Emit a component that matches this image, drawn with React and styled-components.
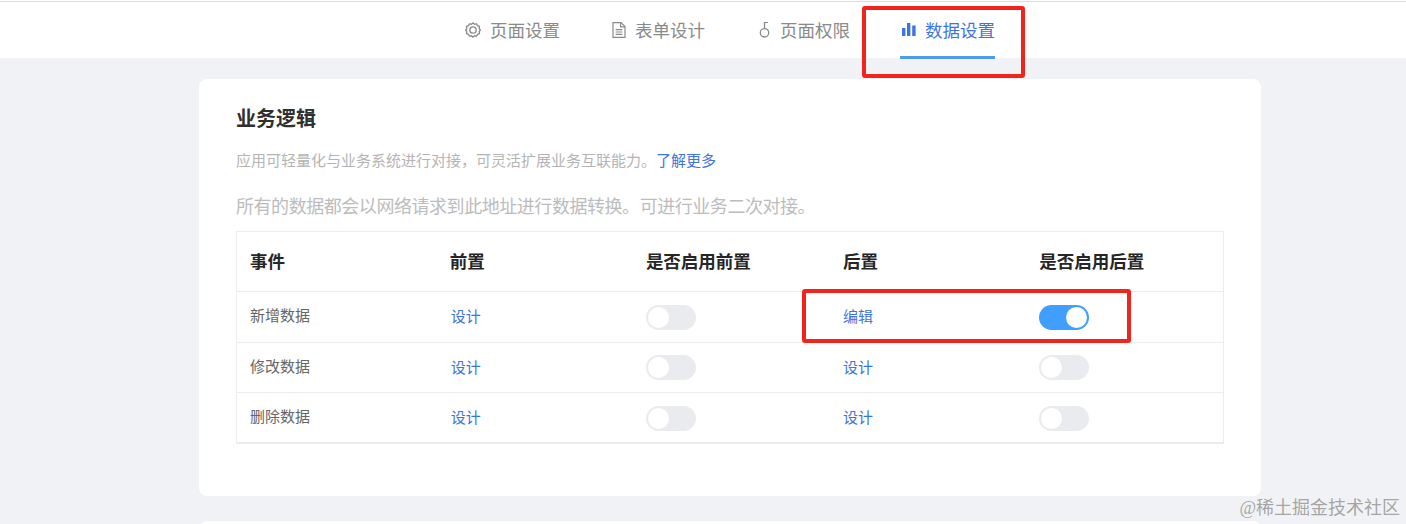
import styled, { createGlobalStyle } from 'styled-components'

const GlobalStyle = createGlobalStyle`
  html, body {
    margin: 0;
    padding: 0;
    background: #f0f2f5;
    font-family: "Liberation Sans", "Noto Sans CJK SC", sans-serif;
  }
`

const tabs = [
  { label: '页面设置', icon: 'gear' },
  { label: '表单设计', icon: 'doc' },
  { label: '页面权限', icon: 'key' },
  { label: '数据设置', icon: 'bars', active: true },
]

const rows = [
  { name: '新增数据', post: '编辑', postOn: true },
  { name: '修改数据', post: '设计' },
  { name: '删除数据', post: '设计' },
]

function TabIcon({ type }) {
  if (type === 'gear') {
    return (
      <svg width="16" height="16" viewBox="0 0 16 16" fill="none" stroke="currentColor" strokeWidth="1.3">
        <path d="M8 .9l1.6 1.3 2-.3 1 1.8 1.9.8-.3 2L15.4 8l-1.2 1.5.3 2-1.9.8-1 1.8-2-.3L8 15.1l-1.6-1.3-2 .3-1-1.8-1.9-.8.3-2L.6 8l1.2-1.5-.3-2 1.9-.8 1-1.8 2 .3z" />
        <circle cx="8" cy="8" r="3.2" />
      </svg>
    )
  }
  if (type === 'doc') {
    return (
      <svg width="16" height="16" viewBox="0 0 16 16" fill="none" stroke="currentColor" strokeWidth="1.2">
        <path d="M3 .6h8l4 4v10.8H3z" />
        <path d="M10.6.6v4.2H15M5.6 7.6h6.8M5.6 10h6.8M5.6 12.4h6.8" />
      </svg>
    )
  }
  if (type === 'key') {
    return (
      <svg width="16" height="16" viewBox="0 0 16 16" fill="none" stroke="currentColor" strokeWidth="1.3">
        <circle cx="9.5" cy="10.8" r="4.2" />
        <path d="M9.5 6.6V.4h3.6" />
      </svg>
    )
  }
  return (
    <svg width="16" height="16" viewBox="0 0 16 16" fill="currentColor">
      <rect x="2" y="6" width="3.4" height="8" />
      <rect x="7" y="1" width="3.4" height="13" />
      <rect x="12.2" y="3.5" width="3.4" height="10.5" />
    </svg>
  )
}

function App() {
  return (
    <Page>
      <GlobalStyle />
      <TopEdge />
      <TabBar>
        {tabs.map((t) => (
          <Tab key={t.label} $active={t.active}>
            <TabIcon type={t.icon} />
            {t.label}
          </Tab>
        ))}
      </TabBar>
      <Card>
        <Title>业务逻辑</Title>
        <Desc>
          应用可轻量化与业务系统进行对接，可灵活扩展业务互联能力。<DescLink>了解更多</DescLink>
        </Desc>
        <Notice>所有的数据都会以网络请求到此地址进行数据转换。可进行业务二次对接。</Notice>
        <Table>
          <thead>
            <tr>
              <Th $w={200}>事件</Th>
              <Th $w={196}>前置</Th>
              <Th $w={197}>是否启用前置</Th>
              <Th $w={196}>后置</Th>
              <Th $w={197}>是否启用后置</Th>
            </tr>
          </thead>
          <tbody>
            {rows.map((r) => (
              <tr key={r.name}>
                <Td $name>{r.name}</Td>
                <Td><TextLink $indent>设计</TextLink></Td>
                <Td><Switch /></Td>
                <Td><TextLink>{r.post}</TextLink></Td>
                <Td><Switch $on={r.postOn} /></Td>
              </tr>
            ))}
          </tbody>
        </Table>
      </Card>
      <NextCard />
      <Mark $tabs />
      <Mark />
      <Watermark>@稀土掘金技术社区</Watermark>
    </Page>
  )
}

const Page = styled.div`
  position: relative;
  height: 524px;
  overflow: hidden;
  background: #f0f2f5;
`

const TopEdge = styled.div`
  height: 1px;
  background: #fff;
`

const TabBar = styled.div`
  display: flex;
  justify-content: center;
  gap: 50px;
  height: 56px;
  padding-left: 54px;
  background: #fff;
  border-top: 1px solid #dcdcdc;
`

const Tab = styled.div`
  display: flex;
  align-items: center;
  gap: 9px;
  height: 53px;
  padding-top: 1px;
  font-size: 17.5px;
  color: ${(p) => (p.$active ? '#3f74e0' : '#8a8a8a')};
  border-bottom: 3px solid ${(p) => (p.$active ? '#4f9bec' : 'transparent')};

  svg {
    flex: none;
  }
`

const Card = styled.div`
  box-sizing: border-box;
  width: 1062px;
  height: 417px;
  margin: 21px 0 0 199px;
  padding: 27px 37px 0;
  background: #fff;
  border-radius: 8px;
`

const Title = styled.div`
  font-size: 20px;
  line-height: 26px;
  font-weight: 700;
  color: #2f2f2f;
`

const Desc = styled.div`
  margin-top: 19px;
  font-size: 15px;
  line-height: 20px;
  color: #b4b4b4;
`

const DescLink = styled.span`
  color: #3f74d8;
`

const Notice = styled.div`
  margin-top: 24px;
  font-size: 18px;
  line-height: 24px;
  letter-spacing: -0.45px;
  color: #bcbcbc;
`

const Table = styled.table`
  box-sizing: border-box;
  width: 988px;
  height: 213px;
  margin-top: 12px;
  table-layout: fixed;
  border-collapse: collapse;
  border: 1px solid #ececec;
  border-bottom-width: 2px;
`

const Th = styled.th`
  box-sizing: border-box;
  width: ${(p) => p.$w}px;
  height: 60px;
  padding: 0 13px 2px;
  text-align: left;
  font-size: 17.5px;
  font-weight: 700;
  color: #262626;
  border-bottom: 1px solid #ececec;
`

const Td = styled.td`
  box-sizing: border-box;
  height: 50.5px;
  padding: 0 13px 4px;
  font-size: 15px;
  color: ${(p) => (p.$name ? '#666' : '#333')};
  border-bottom: 1px solid #ececec;
  vertical-align: middle;
`

const TextLink = styled.span`
  display: inline-block;
  margin: 2px 0 0 ${(p) => (p.$indent ? '1px' : '0')};
  color: #3f74d8;
`

const Switch = styled.span`
  position: relative;
  display: block;
  width: 50px;
  height: 25px;
  margin-top: 5px;
  border-radius: 13px;
  background: ${(p) => (p.$on ? '#409eff' : '#e9ebee')};

  &::after {
    content: '';
    position: absolute;
    top: 2px;
    left: ${(p) => (p.$on ? '27px' : '2px')};
    width: 21px;
    height: 21px;
    border-radius: 50%;
    background: #fff;
  }
`

const NextCard = styled.div`
  height: 40px;
  margin: 25px 0 0 199px;
  width: 1062px;
  background: #fff;
  border-radius: 8px;
`

const Mark = styled.div`
  position: absolute;
  box-sizing: border-box;
  left: ${(p) => (p.$tabs ? '862px' : '802px')};
  top: ${(p) => (p.$tabs ? '6px' : '289px')};
  width: ${(p) => (p.$tabs ? '163px' : '329px')};
  height: ${(p) => (p.$tabs ? '72px' : '54px')};
  border: 4px solid #f0241c;
  border-radius: 3px;
`

const Watermark = styled.div`
  position: absolute;
  right: 6px;
  bottom: 4px;
  font-size: 18px;
  line-height: 24px;
  font-family: "Liberation Serif", "Noto Sans CJK SC", serif;
  color: rgba(120, 120, 120, 0.65);
`

export default App
